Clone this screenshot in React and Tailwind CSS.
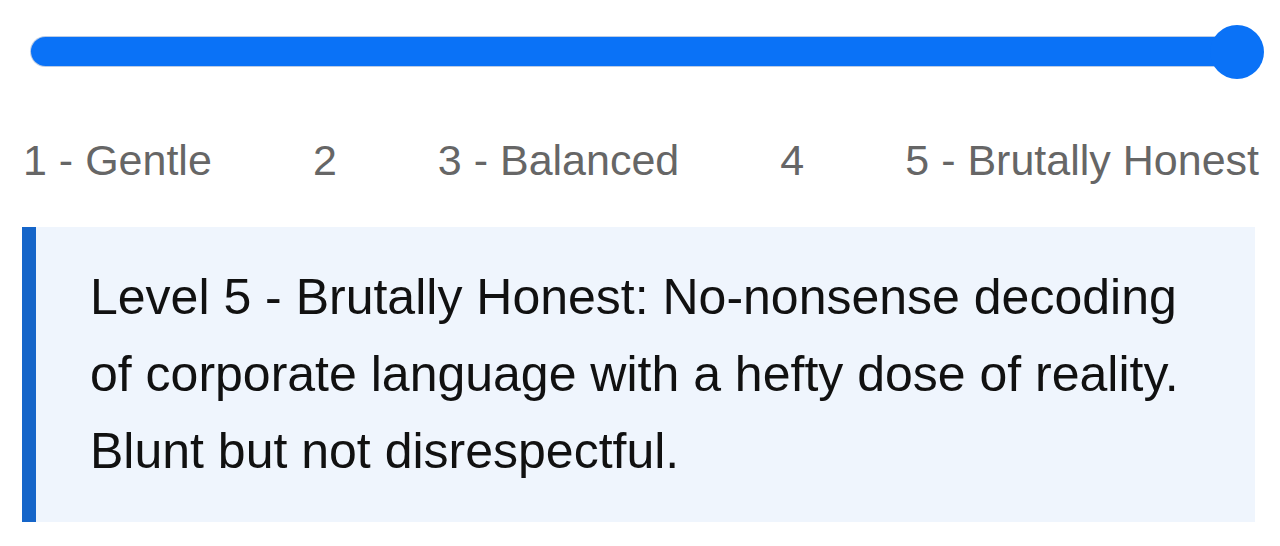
export default function App() {
  const labels = ["1 - Gentle", "2", "3 - Balanced", "4", "5 - Brutally Honest"];

  return (
    <div className="h-[546px] w-[1280px] overflow-hidden bg-white [font-family:'Liberation_Sans',Arial,sans-serif]">
      <div className="pt-[37px] pl-[31px]">
        <div className="relative h-[29px] w-[1206px] rounded-full bg-[#0a72f7] shadow-[0_0_0_1px_rgba(60,110,180,0.35)]">
          <div className="absolute right-[-27px] top-1/2 h-[54px] w-[54px] -translate-y-1/2 rounded-full bg-[#0a72f7]" />
        </div>
      </div>

      <div className="mt-[69px] flex w-[1259px] justify-between pl-[23px] text-[43px] leading-[50px] text-[#666666]">
        {labels.map((label) => (
          <span key={label}>{label}</span>
        ))}
      </div>

      <div className="mt-[42px] ml-[22px] w-[1233px] border-l-[14px] border-[#1565c9] bg-[#eff5fd] py-[32px] pl-[54px] pr-[57px] text-[50px] leading-[77px] text-[#111111]">
        Level 5 - Brutally Honest: No-nonsense decoding of corporate language
        with a hefty dose of reality. Blunt but not disrespectful.
      </div>
    </div>
  );
}
